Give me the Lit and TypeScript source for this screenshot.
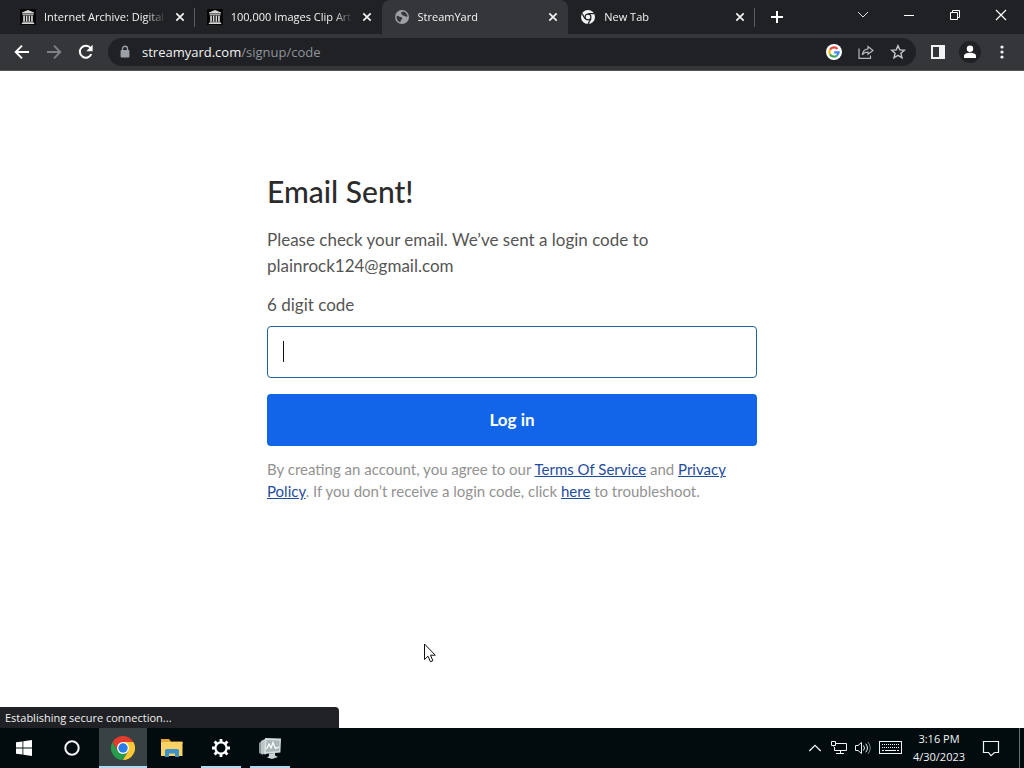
import { LitElement, html, css, svg, nothing } from "lit";
import { customElement, state } from "lit/decorators.js";
import { classMap } from "lit/directives/class-map.js";

const archiveIcon = svg`<svg width="16" height="16" viewBox="0 0 16 16"><rect width="16" height="16" fill="#060606"/><path fill="#d6d6d6" d="M8 1 14 3.6V4.6H2V3.6ZM2.5 5.2h11v1.1h-11ZM3.2 6.8h1.7v5.6H3.2ZM5.9 6.8h1.5v5.6H5.9ZM8.6 6.8h1.5v5.6H8.6ZM11.1 6.8h1.7v5.6h-1.7ZM2.5 12.8h11v.9h-11ZM1.8 14.1h12.4v1H1.8Z"/></svg>`;
const globeIcon = svg`<svg width="16" height="16" viewBox="0 0 16 16"><circle cx="8" cy="8" r="7" fill="#9da0a4"/><path fill="#35363a" d="M2.6 6.7c1.8 0 2.6 1.2 4 1.3 1.300.1 1.700.7 1.500 1.800-.2.9-1.200.9-1.300 1.900-.1.8-.5 1.400-.9 1.600C3.600 12.400 2.100 9.500 2.600 6.700ZM8.800 2.500c-.6.8-1.900.8-1.900 1.800 0 .9 1.200.6 1.400 1.400.2.8.9 1.300 1.800 1.100 1-.2 1.300.8 2.200.9.700.1 1.100-.1 1.300-.4-.4-2.500-2.200-4.500-4.800-4.800Z"/></svg>`;
const chromeMono = svg`<svg width="16" height="16" viewBox="0 0 16 16"><circle cx="8" cy="8" r="7" fill="#f1f3f4"/><circle cx="8" cy="8" r="3.500" fill="#202124"/><circle cx="8" cy="8" r="2.300" fill="#f1f3f4"/><path fill="none" stroke="#202124" stroke-width="1.300" d="M8 4.600H14M5 9.700 2 4.500M11 9.700 8 15"/></svg>`;

const icon = {
  close: svg`<svg width="16" height="16" viewBox="0 0 16 16"><path d="m4.300 4.300 7.400 7.400m0-7.400-7.400 7.400" stroke="#f1f3f4" stroke-width="1.700" fill="none"/></svg>`,
  plus: svg`<svg width="16" height="16" viewBox="0 0 16 16"><path d="M8 2v12M2 8h12" stroke="#fff" stroke-width="2"/></svg>`,
  chevron: svg`<svg width="12" height="12" viewBox="0 0 12 12"><path d="m1 3 5 5 5-5" stroke="#dfe1e5" fill="none"/></svg>`,
  minimize: svg`<svg width="12" height="12" viewBox="0 0 12 12"><path d="M1 6.500h10" stroke="#fff"/></svg>`,
  restore: svg`<svg width="12" height="12" viewBox="0 0 12 12"><path d="M1.500 3.500h7v7h-7ZM3.500 3V1.500h7v7H9" stroke="#fff" fill="none"/></svg>`,
  exit: svg`<svg width="12" height="12" viewBox="0 0 12 12"><path d="m1 1 10 10M11 1 1 11" stroke="#fff" stroke-width="1.200"/></svg>`,
  back: svg`<svg width="16" height="16" viewBox="0 0 16 16"><path d="M15 8H2m6-6.300L1.700 8 8 14.300" stroke="#fff" stroke-width="1.900" fill="none"/></svg>`,
  forward: svg`<svg width="16" height="16" viewBox="0 0 16 16"><path d="M1 8h13M8 1.700 14.300 8 8 14.300" stroke="#7f8185" stroke-width="1.900" fill="none"/></svg>`,
  reload: svg`<svg width="16" height="16" viewBox="0 0 16 16"><path d="M13.300 10.200A6 6 0 1 1 12.600 4" stroke="#fff" stroke-width="2" fill="none"/><path d="M14.600.8V7.200H8.300Z" fill="#fff"/></svg>`,
  lock: svg`<svg width="10" height="14" viewBox="0 0 10 14"><path d="M2.500 6V3.700a2.500 2.500 0 0 1 5 0V6" stroke="#9aa0a6" stroke-width="1.400" fill="none"/><rect x=".6" y="5" width="8.800" height="7.600" rx="1" fill="#9aa0a6"/></svg>`,
  google: svg`<svg width="16" height="16" viewBox="0 0 16 16"><circle cx="8" cy="8" r="8" fill="#fff"/><g fill="none" stroke-width="2.200"><path d="M11.400 4.900A4.600 4.600 0 0 0 4 5.800" stroke="#ea4335"/><path d="M4 5.800a4.600 4.600 0 0 0 0 4.400" stroke="#fbbc05"/><path d="M4 10.200a4.600 4.600 0 0 0 7 1.300" stroke="#34a853"/><path d="M11 11.500A4.600 4.600 0 0 0 12.600 8.300H8.200" stroke="#4285f4"/></g></svg>`,
  share: svg`<svg width="16" height="16" viewBox="0 0 16 16"><path d="M1 4.500V14.300H12.500V11.500M10 2.500 15 6.500 10 10.300V8.200C7.200 8.200 5.500 9 4.300 10.800 4.600 7.500 6.500 5.200 10 4.800Z" stroke="#b4b8bd" stroke-width="1.200" fill="none"/></svg>`,
  star: svg`<svg width="16" height="16" viewBox="0 0 16 16"><path d="m8 1.700 1.800 4.200 4.600.4-3.500 3 1.100 4.500L8 11.400l-4 2.400 1.100-4.500-3.500-3 4.600-.4Z" stroke="#c4c7cb" stroke-width="1.400" fill="none"/></svg>`,
  panel: svg`<svg width="16" height="16" viewBox="0 0 16 16"><path fill="#f1f3f4" fill-rule="evenodd" d="M1 1h14v14H1ZM3 3v10h6V3Z"/></svg>`,
  profile: svg`<svg width="22" height="22" viewBox="0 0 22 22"><circle cx="11" cy="11" r="11" fill="#202124"/><circle cx="11" cy="7.700" r="3.200" fill="#fff"/><path fill="#fff" d="M5 17v-2c0-2 3-3.200 6-3.200s6 1.200 6 3.200v2Z"/></svg>`,
  more: svg`<svg width="4" height="16" viewBox="0 0 4 16"><g fill="#f1f3f4"><circle cx="2" cy="3" r="1.600"/><circle cx="2" cy="8" r="1.600"/><circle cx="2" cy="13" r="1.600"/></g></svg>`,
  windows: svg`<svg width="16" height="16" viewBox="0 0 16 16"><path fill="#fff" d="M0 2.300 6.500 1.400V7.600H0ZM7.300 1.300 16 0v7.600H7.300ZM0 8.400h6.500v6.200L0 13.700ZM7.300 8.400H16V16l-8.700-1.300Z"/></svg>`,
  ring: svg`<svg width="16" height="16" viewBox="0 0 16 16"><circle cx="8" cy="8" r="6.700" stroke="#f4f6f6" stroke-width="2" fill="none"/></svg>`,
  chrome: svg`<svg width="24" height="24" viewBox="0 0 24 24"><path fill="#269c4c" d="M12 24A12 12 0 0 1 1.600 6L6.800 15 12 12l5.200 3Z"/><path fill="#e33b2e" d="M12 6H22.400A12 12 0 0 0 1.600 6L6.800 15Z"/><path fill="#fcc934" d="M12 6h10.400A12 12 0 0 1 12 24l5.200-9Z"/><circle cx="12" cy="12" r="6" fill="#fff"/><circle cx="12" cy="12" r="4.700" fill="#2a7ce8"/></svg>`,
  folder: svg`<svg width="24" height="24" viewBox="0 0 24 24"><path fill="#e5a93a" d="M1 3h8l2 2.500h11.500V8H1Z"/><path fill="#fbd365" d="M1 6h21.500v14H1Z"/><path fill="#3f8fc9" d="M5 21v-6.500q0-1.500 1.500-1.500h11q1.500 0 1.500 1.500V21h-4v-3.500H9V21Z"/></svg>`,
  gear: svg`<svg width="20" height="20" viewBox="0 0 20 20"><circle cx="10" cy="10" r="5.600" stroke="#fff" stroke-width="2.200" fill="none"/><path stroke="#fff" stroke-width="2.800" d="M10 1v3.500M10 15.500V19M1 10h3.500M15.500 10H19M3.600 3.600 6 6M14 14l2.400 2.400M3.600 16.400 6 14M14 6l2.400-2.400"/></svg>`,
  monitor: svg`<svg width="24" height="24" viewBox="0 0 24 24"><path fill="#8d9798" d="M1 7 5 4v15l-4-2Z"/><path fill="#bcc6c7" d="m3 5 5-2.500v16L3 17.500Z"/><path fill="#d4dcdc" d="m7 2 16 .6-.6 14L6 18Z"/><path fill="#aab7b8" d="m8.500 4 13 .5-.5 10.500L8 16Z"/><path d="m8.500 13 2.500-5 2 4 2-5.500 2.500 6L21 11" stroke="#fff" fill="none" stroke-width="1.200"/><path fill="#cbd2d2" d="m11 17.500 6-.5v2.500l3 1.500-6 2-5-1.500 2-1.500Z"/></svg>`,
  up: svg`<svg width="14" height="14" viewBox="0 0 14 14"><path d="m1.300 10 5.700-5.700L12.700 10" stroke="#f2f5f5" stroke-width="1.300" fill="none"/></svg>`,
  network: svg`<svg width="16" height="16" viewBox="0 0 16 16"><path d="M5 3.500h10.500v7H3.500V7M9.500 10.500v3M5 13.500h8M.5 1.500h4v4h-4ZM2.500 5.500v1" stroke="#f2f5f5" fill="none"/></svg>`,
  volume: svg`<svg width="16" height="16" viewBox="0 0 16 16"><path d="M.5 5.500H3l3.500-3v11L3 10.500H.5ZM8.500 5.500q2 2.500 0 5M10.700 3.700q3.500 4.300 0 8.600" stroke="#f2f5f5" fill="none"/><path d="M13 2q4.500 6 0 12" stroke="#7b8585" fill="none"/></svg>`,
  keyboard: svg`<svg width="24" height="14" viewBox="0 0 24 14"><rect x=".5" y=".5" width="22" height="12" stroke="#f2f5f5" fill="none"/><path d="M3 3.500h17M3 6.500h17" stroke="#f2f5f5" stroke-width="1" stroke-dasharray="1 1"/><path d="M3 9.500h2M6 9.500h11M18 9.500h2" stroke="#f2f5f5"/></svg>`,
  notes: svg`<svg width="18" height="18" viewBox="0 0 18 18"><path d="M1.500 2.500h15v11h-4L9 16.700 6.500 13.500h-5Z" stroke="#f2f5f5" stroke-width="1.200" fill="none"/></svg>`,
  pointer: svg`<svg width="12" height="20" viewBox="0 0 12 20"><path d="M.5 1v15.500L4 13.200 6.500 18.800 8.900 17.700 6.500 12.200H11.300Z" fill="#fff" stroke="#111"/></svg>`,
};

@customElement("browser-tabs")
class BrowserTabs extends LitElement {
  @state() private active = 2;

  private tabs = [
    { title: "Internet Archive: Digital Library", icon: archiveIcon },
    { title: "100,000 Images Clip Art", icon: archiveIcon },
    { title: "StreamYard", icon: globeIcon },
    { title: "New Tab", icon: chromeMono },
  ];

  static styles = css`
    :host { display: flex; height: 34px; padding-left: 8px; background: #202124; color: #f1f3f4; font: 11px/16px "Open Sans", "Noto Sans", sans-serif; }
    svg { display: block; flex: none; }
    button { border: 0; padding: 0; background: none; color: inherit; font: inherit; }
    .tabs { flex: 0 1 747px; min-width: 0; display: grid; grid-template-columns: repeat(4, minmax(0, 1fr)); }
    .tab { display: flex; align-items: center; padding-right: 7px; border-radius: 8px 8px 0 0; background: #202124; }
    .tab.active { background: #35363a; }
    .tab.ruled { background: linear-gradient(#5b5c60, #5b5c60) right 8px / 1px 19px no-repeat; }
    .pick { flex: 1; min-width: 0; height: 34px; display: flex; align-items: center; gap: 8px; padding-left: 12px; }
    .title { flex: 1; overflow: hidden; white-space: nowrap; text-align: left; -webkit-mask-image: linear-gradient(to left, transparent, #000 20px); margin-right: 6px; }
    .new { width: 28px; margin: 0 auto 0 8px; display: grid; place-items: center; }
    .win { width: 46px; height: 29px; display: grid; place-items: center; }
  `;

  render() {
    return html`
      <div class="tabs">
        ${this.tabs.map((t, i) => html`
          <div class=${classMap({ tab: true, active: i === this.active, ruled: i === 0 || i === 3 })}>
            <button class="pick" @click=${() => (this.active = i)}>${t.icon}<span class="title">${t.title}</span></button>
            <button aria-label="Close tab">${icon.close}</button>
          </div>`)}
      </div>
      <button class="new" aria-label="New tab">${icon.plus}</button>
      <button class="win" aria-label="Search tabs">${icon.chevron}</button>
      <button class="win" aria-label="Minimize">${icon.minimize}</button>
      <button class="win" aria-label="Restore">${icon.restore}</button>
      <button class="win" aria-label="Close">${icon.exit}</button>
    `;
  }
}

@customElement("browser-toolbar")
class BrowserToolbar extends LitElement {
  static styles = css`
    :host { display: flex; align-items: center; height: 36px; padding: 0 6px; background: #35363a; border-bottom: 1px solid #515256; font: 13px/20px "Open Sans", "Noto Sans", sans-serif; }
    svg { display: block; }
    button { width: 32px; height: 28px; border: 0; padding: 0; background: none; display: grid; place-items: center; flex: none; }
    .address { flex: 1; min-width: 0; height: 28px; margin: 0 6px; padding: 0 2px 0 12px; display: flex; align-items: center; border-radius: 14px; background: #202124; }
    .url { flex: 1; margin-left: 12px; color: #8f949a; white-space: nowrap; overflow: hidden; }
    .domain { color: #f1f3f4; }
  `;

  render() {
    return html`
      <button aria-label="Back">${icon.back}</button>
      <button aria-label="Forward">${icon.forward}</button>
      <button aria-label="Reload">${icon.reload}</button>
      <div class="address">
        ${icon.lock}
        <span class="url"><span class="domain">streamyard.com</span>/signup/code</span>
        <button aria-label="Search with Google">${icon.google}</button>
        <button aria-label="Share">${icon.share}</button>
        <button aria-label="Bookmark">${icon.star}</button>
      </div>
      <button aria-label="Side panel">${icon.panel}</button>
      <button aria-label="Profile">${icon.profile}</button>
      <button aria-label="Menu">${icon.more}</button>
    `;
  }
}

@customElement("login-page")
class LoginPage extends LitElement {
  @state() private code = "";

  static styles = css`
    :host { display: block; padding: 100px 16px 16px; background: #fff; color: #555; font: 17px/26px Lato, "Open Sans", sans-serif; }
    form { max-width: 490px; margin: 0 auto; }
    h1 { margin: 0 0 16px; color: #2b2b2b; font-size: 30px; line-height: 40px; font-weight: 500; }
    p { margin: 0 0 13px; }
    label { display: block; margin-bottom: 8px; }
    .field { position: relative; }
    input { box-sizing: border-box; display: block; width: 100%; height: 52px; padding: 0 15px; border: 1px solid #22659c; border-radius: 4px; outline: 0; background: #fff; color: #2b2b2b; font: inherit; }
    .caret { position: absolute; left: 16px; top: 15px; width: 1px; height: 21px; background: #111; }
    button { display: block; width: 100%; height: 52px; margin: 16px 0 12px; border: 0; border-radius: 4px; background: #1264e8; color: #fff; font: inherit; font-weight: 700; }
    .terms { margin: 0; color: #929292; font-size: 15px; line-height: 22px; }
    a { color: #1f4c9e; }
  `;

  render() {
    return html`
      <form @submit=${(e: Event) => e.preventDefault()}>
        <h1>Email Sent!</h1>
        <p>Please check your email. We’ve sent a login code to<br />plainrock124@gmail.com</p>
        <label for="code">6 digit code</label>
        <div class="field">
          <input id="code" inputmode="numeric" maxlength="6" autocomplete="off" .value=${this.code}
            @input=${(e: Event) => (this.code = (e.target as HTMLInputElement).value)} />
          ${this.code ? nothing : html`<span class="caret"></span>`}
        </div>
        <button type="submit">Log in</button>
        <p class="terms">By creating an account, you agree to our <a href="#terms">Terms Of Service</a> and <a href="#privacy">Privacy Policy</a>. If you don’t receive a login code, click <a href="#help">here</a> to troubleshoot.</p>
      </form>
    `;
  }
}

@customElement("task-bar")
class TaskBar extends LitElement {
  static styles = css`
    :host { display: flex; height: 40px; background: #020c0e; color: #f2f5f5; font: 11px/18px "Open Sans", "Noto Sans", sans-serif; }
    svg { display: block; }
    button { border: 0; padding: 0; background: none; color: inherit; font: inherit; display: grid; place-items: center; }
    .app { width: 48px; }
    .apps { display: flex; gap: 1px; margin: 0 auto 0 3px; }
    .open { background: linear-gradient(#a9dcf3, #a9dcf3) bottom / 40px 2px no-repeat; }
    .front { background: linear-gradient(#a9dcf3, #a9dcf3) bottom / 48px 2px no-repeat #384244; }
    .tray { width: 24px; }
    .wide { width: 31px; }
    .clock { width: 66px; align-content: center; white-space: nowrap; }
    .notes { width: 38px; margin-right: 9px; }
    .desktop { width: 5px; border-left: 1px solid #667072; }
  `;

  render() {
    return html`
      <button class="app" aria-label="Start">${icon.windows}</button>
      <button class="app" aria-label="Cortana">${icon.ring}</button>
      <div class="apps">
        <button class="app front" aria-label="Chrome">${icon.chrome}</button>
        <button class="app" aria-label="File Explorer">${icon.folder}</button>
        <button class="app open" aria-label="Settings">${icon.gear}</button>
        <button class="app open" aria-label="Resource Monitor">${icon.monitor}</button>
      </div>
      <button class="tray" aria-label="Hidden icons">${icon.up}</button>
      <button class="tray" aria-label="Network">${icon.network}</button>
      <button class="tray" aria-label="Volume">${icon.volume}</button>
      <button class="wide" aria-label="Touch keyboard">${icon.keyboard}</button>
      <button class="clock"><span>3:16 PM</span><span>4/30/2023</span></button>
      <button class="notes" aria-label="Notifications">${icon.notes}</button>
      <button class="desktop" aria-label="Show desktop"></button>
    `;
  }
}

@customElement("app-root")
class AppRoot extends LitElement {
  static styles = css`
    :host { display: flex; flex-direction: column; min-height: 100vh; }
    .view { position: relative; flex: 1; background: #fff; }
    .status { position: absolute; left: 0; bottom: 0; box-sizing: border-box; width: 33%; min-width: 339px; height: 21px; padding-left: 5px; border-radius: 0 4px 0 0; background: #202124; color: #f1f3f4; font: 11px/21px "Open Sans", "Noto Sans", sans-serif; }
    .pointer { position: absolute; left: 424px; top: 572px; }
    .pointer svg { display: block; }
  `;

  render() {
    return html`
      <browser-tabs></browser-tabs>
      <browser-toolbar></browser-toolbar>
      <div class="view">
        <login-page></login-page>
        <div class="status" role="status">Establishing secure connection...</div>
        <span class="pointer">${icon.pointer}</span>
      </div>
      <task-bar></task-bar>
    `;
  }
}
